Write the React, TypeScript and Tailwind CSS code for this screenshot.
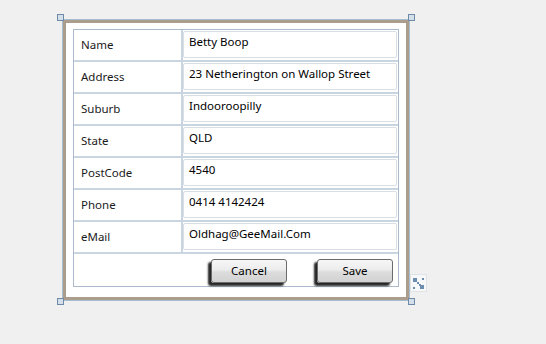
import React from "react";

const rows: [string, string][] = [
  ["Name", "Betty Boop"],
  ["Address", "23 Netherington on Wallop Street"],
  ["Suburb", "Indooroopilly"],
  ["State", "QLD"],
  ["PostCode", "4540"],
  ["Phone", "0414 4142424"],
  ["eMail", "Oldhag@GeeMail.Com"],
];

function Handle({ cls }: { cls: string }) {
  return (
    <div
      className={
        "absolute w-[7px] h-[7px] border border-[#6f8aa6] bg-[#d3dfeb] " + cls
      }
    />
  );
}

function Btn({ label }: { label: string }) {
  return (
    <button className="w-[76px] h-[24px] rounded-[3px] border border-[#6b6b6b] bg-[linear-gradient(to_bottom,#f7f7f7_0%,#ececec_45%,#dcdcdc_55%,#d2d2d2_100%)] shadow-[-3px_3px_2px_rgba(0,0,0,0.85)] text-[11.5px] text-black leading-none">
      {label}
    </button>
  );
}

export default function App() {
  return (
    <div
      className="w-[546px] h-[344px] bg-[#f0f0f0] pl-[62px] pt-[19px]"
      style={{ fontFamily: '"Noto Sans", "Open Sans", sans-serif' }}
    >
      <div className="relative w-[348px] h-[282px] border border-[#a8bdd2]">
        <div className="w-full h-full border-[3px] border-[#ac9e8c] bg-white pl-[7px] pt-[6px]">
          <div className="w-[326px] border border-[#a9bbcd] bg-white">
            {rows.map(([label, value]) => (
              <div
                key={label}
                className="flex h-[32px] border-b-2 border-[#c9d5e0]"
              >
                <div className="w-[107px] flex items-center pl-[7px] text-[11.5px] text-[#1a1a1a]">
                  {label}
                </div>
                <div className="w-[2px] bg-[#c9d5e0]" />
                <div className="pt-px">
                  <div className="w-[214px] h-[27px] border border-[#d9dee3] rounded-[2px] pl-[5px] pt-[2px] text-[11.5px] leading-[16px] text-black whitespace-nowrap">
                    {value}
                  </div>
                </div>
              </div>
            ))}
            <div className="h-[32px] flex items-start justify-end gap-[30px] pr-[5px] pt-[5px]">
              <Btn label="Cancel" />
              <Btn label="Save" />
            </div>
          </div>
        </div>
        <Handle cls="left-[-6px] top-[-6px]" />
        <Handle cls="right-[-6px] top-[-6px]" />
        <Handle cls="left-[-6px] bottom-[-5px]" />
        <Handle cls="right-[-6px] bottom-[-5px]" />
        <div className="absolute left-[347px] top-[254px] w-[17px] h-[18px] border border-[#dfe3e8] bg-[#f7f8fa] flex items-center justify-center">
          <svg width="13" height="13" viewBox="0 0 13 13">
            <g fill="#6d8db0">
              <rect x="1" y="1" width="4" height="2" />
              <rect x="1" y="3" width="2" height="2" />
              <rect x="3" y="3" width="2" height="2" />
              <rect x="5" y="5" width="2" height="2" />
              <rect x="7" y="7" width="2" height="2" />
              <rect x="8" y="8" width="2" height="2" />
              <rect x="8" y="10" width="4" height="2" />
              <rect x="10" y="8" width="2" height="2" />
              <rect x="10" y="1" width="2" height="2" />
              <rect x="1" y="10" width="2" height="2" />
            </g>
          </svg>
        </div>
      </div>
    </div>
  );
}
